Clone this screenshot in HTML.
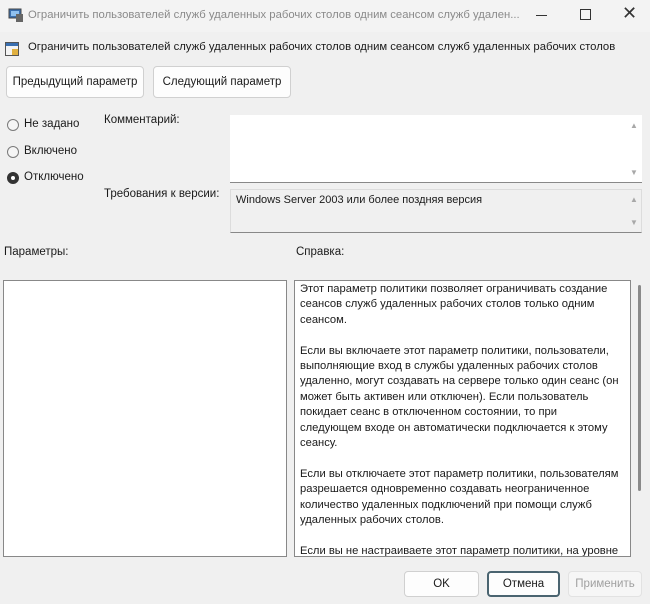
<!DOCTYPE html>
<html><head><meta charset="utf-8"><style>
*{box-sizing:border-box;margin:0;padding:0}
body{width:650px;height:604px;background:#f0f0f0;font-family:"Liberation Sans",sans-serif;font-size:11.5px;color:#1a1a1a;position:relative;overflow:hidden}
.a{position:absolute;white-space:nowrap}
.btn{position:absolute;background:#fdfdfd;border:1px solid #d0d0d0;border-radius:4px;text-align:center;font-size:11.5px}
.rad{position:absolute;width:12px;height:12px;border:1px solid #7a7a7a;border-radius:50%;background:#f5f5f5}
.arr{position:absolute;font-size:8px;color:#a8a8a8}
</style></head><body>
<div class="a" style="left:0;top:0;width:650px;height:32px;background:#f3f3f3"></div>
<svg class="a" style="left:8px;top:8px" width="16" height="14"><rect x="1" y="1" width="12" height="9" fill="#3a6fb0" stroke="#444"/><rect x="3" y="3" width="8" height="5" fill="#8fc0ef"/><rect x="8" y="6" width="7" height="8" fill="#666"/></svg>
<div class="a" style="left:28px;top:9px;color:#8a8a8a;font-size:11.3px">Ограничить пользователей служб удаленных рабочих столов одним сеансом служб удален...</div>
<div class="a" style="left:536px;top:15px;width:11px;height:1px;background:#333"></div>
<div class="a" style="left:580px;top:9px;width:11px;height:11px;border:1px solid #333"></div>
<div class="a" style="left:622px;top:3px;font-size:18px;color:#333">✕</div>
<svg class="a" style="left:5px;top:42px" width="14" height="14"><rect x="0.5" y="0.5" width="13" height="13" fill="#f4f4f4" stroke="#555"/><rect x="1" y="1" width="12" height="3" fill="#3a6fb0"/><rect x="7" y="7" width="6" height="6" fill="#e0b040"/></svg>
<div class="a" style="left:28px;top:41px;font-size:11.3px">Ограничить пользователей служб удаленных рабочих столов одним сеансом служб удаленных рабочих столов</div>
<div class="btn" style="left:6px;top:66px;width:138px;height:32px;line-height:30px">Предыдущий параметр</div>
<div class="btn" style="left:153px;top:66px;width:138px;height:32px;line-height:30px">Следующий параметр</div>
<div class="rad" style="left:7px;top:119px"></div><div class="a" style="left:24px;top:118px">Не задано</div>
<div class="rad" style="left:7px;top:146px"></div><div class="a" style="left:24px;top:145px">Включено</div>
<div class="rad" style="left:7px;top:172px;background:#fff;border:4px solid #333"></div><div class="a" style="left:24px;top:171px">Отключено</div>
<div class="a" style="left:104px;top:114px">Комментарий:</div>
<div class="a" style="left:230px;top:115px;width:412px;height:68px;background:#fff;border-bottom:1px solid #888"></div>
<div class="arr" style="left:630px;top:121px">▲</div><div class="arr" style="left:630px;top:168px">▼</div>
<div class="a" style="left:104px;top:188px">Требования к версии:</div>
<div class="a" style="left:230px;top:189px;width:412px;height:44px;background:#f0f0f0;border:1px solid #dcdcdc;border-bottom:1px solid #888"></div>
<div class="a" style="left:236px;top:194px;font-size:11px">Windows Server 2003 или более поздняя версия</div>
<div class="arr" style="left:630px;top:195px">▲</div><div class="arr" style="left:630px;top:218px">▼</div>
<div class="a" style="left:4px;top:246px">Параметры:</div>
<div class="a" style="left:296px;top:246px">Справка:</div>
<div class="a" style="left:3px;top:280px;width:284px;height:277px;background:#fff;border:1px solid #888"></div>
<div class="a" style="left:294px;top:280px;width:337px;height:277px;background:#fff;border:1px solid #888;overflow:hidden">
<div style="position:absolute;left:5px;top:1px;line-height:15.4px;font-size:11.2px;white-space:nowrap">Этот параметр политики позволяет ограничивать создание<br>сеансов служб удаленных рабочих столов только одним<br>сеансом.<br><br>Если вы включаете этот параметр политики, пользователи,<br>выполняющие вход в службы удаленных рабочих столов<br>удаленно, могут создавать на сервере только один сеанс (он<br>может быть активен или отключен). Если пользователь<br>покидает сеанс в отключенном состоянии, то при<br>следующем входе он автоматически подключается к этому<br>сеансу.<br><br>Если вы отключаете этот параметр политики, пользователям<br>разрешается одновременно создавать неограниченное<br>количество удаленных подключений при помощи служб<br>удаленных рабочих столов.<br><br>Если вы не настраиваете этот параметр политики, на уровне</div></div>
<div class="a" style="left:638px;top:285px;width:3px;height:206px;background:#8a8a8a;border-radius:2px"></div>
<div class="btn" style="left:404px;top:571px;width:75px;height:26px;line-height:24px">OK</div>
<div class="btn" style="left:487px;top:571px;width:73px;height:26px;line-height:22px;border:2px solid #4a6470">Отмена</div>
<div class="btn" style="left:568px;top:571px;width:74px;height:26px;line-height:24px;color:#a0a0a0;background:#f6f6f6;border-color:#e2e2e2">Применить</div>
</body></html>
